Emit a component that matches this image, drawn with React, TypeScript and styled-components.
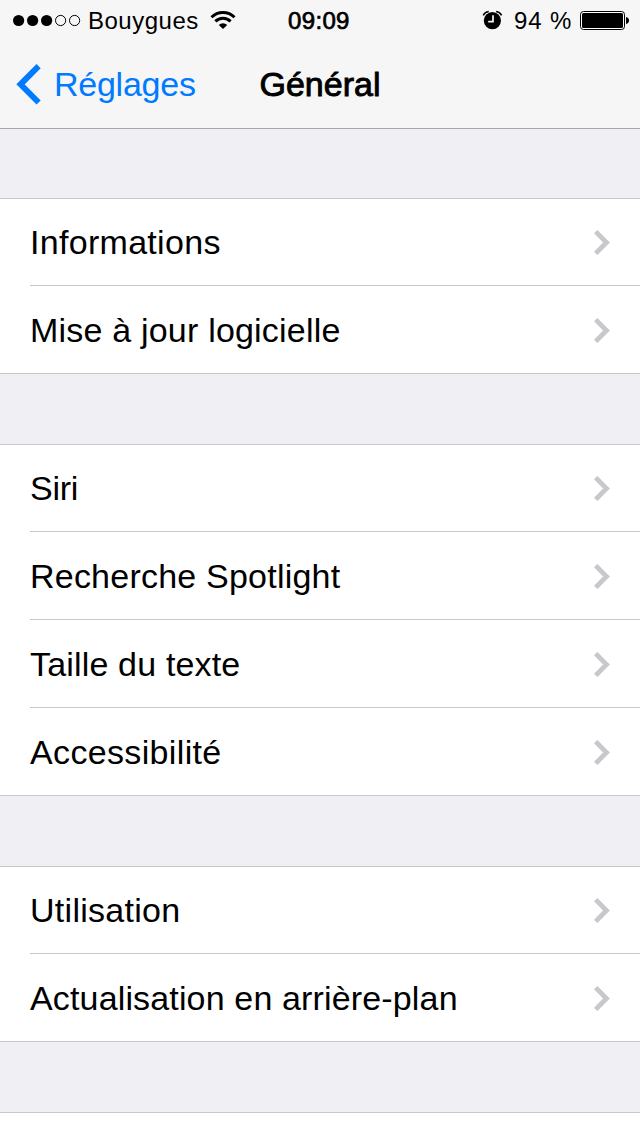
import React from 'react';
import styled, { createGlobalStyle } from 'styled-components';

const GlobalStyle = createGlobalStyle`
  * { box-sizing: border-box; }
  html, body { margin: 0; padding: 0; background: #efeff4; }
  body { overflow: hidden; }
`;

const Screen = styled.div`
  display: flex;
  flex-direction: column;
  width: 640px;
  height: 1136px;
  overflow: hidden;
  background: #efeff4;
  color: #000;
  font-family: 'Liberation Sans', Arial, Helvetica, sans-serif;
`;

const Header = styled.header`
  flex: none;
  height: 129px;
  background: #f6f6f6;
  border-bottom: 1px solid #a7a7aa;
`;

const StatusBar = styled.div`
  display: grid;
  grid-template-columns: 288px 1fr 158px;
  height: 40px;
  font-size: 24px;
  line-height: 41px;
  white-space: pre;
`;

const StatusGroup = styled.div`
  display: flex;
  align-items: flex-start;
`;

const Signal = styled.svg`
  flex: none;
  margin: 13px 6px 0 12px;
`;

const StatusText = styled.span<{ $spacing?: number }>`
  letter-spacing: ${p => p.$spacing ?? 0}px;
`;

const Wifi = styled.svg`
  flex: none;
  margin: 10px 0 0 11px;
`;

const Time = styled.span`
  letter-spacing: 0.35px;
  -webkit-text-stroke: 0.7px #000;
`;

const Alarm = styled.svg`
  flex: none;
  margin: 10px 10px 0 0;
`;

const Battery = styled.svg`
  flex: none;
  margin: 11px 0 0 8px;
`;

const NavBar = styled.nav`
  display: grid;
  grid-template-columns: 1fr 122px 1fr;
  height: 88px;
  font-size: 34px;
  line-height: 88px;
`;

const Back = styled.a`
  display: flex;
  align-items: flex-start;
  padding-left: 16px;
  color: #007aff;
  letter-spacing: -0.25px;
`;

const BackChevron = styled.svg`
  flex: none;
  margin: 24px 12px 0 0;
`;

const Title = styled.h1`
  margin: 0;
  font-size: 34px;
  font-weight: 400;
  text-align: center;
  white-space: nowrap;
  -webkit-text-stroke: 0.9px #000;
`;

const Group = styled.section<{ $first?: boolean }>`
  flex: none;
  margin-top: ${p => (p.$first ? 69 : 70)}px;
  padding-left: 30px;
  background: #fff;
  border-top: 1px solid #c8c7cc;
  border-bottom: 1px solid #c8c7cc;
`;

const Row = styled.div`
  display: flex;
  align-items: center;
  justify-content: space-between;
  padding-right: 30px;
  font-size: 34px;

  &:first-child { height: 86px; }
  & + & { height: 88px; border-top: 1px solid #c8c7cc; }
`;

const Label = styled.span<{ $spacing: number }>`
  line-height: 86px;
  white-space: nowrap;
  letter-spacing: ${p => p.$spacing}px;
`;

type Item = { label: string; spacing: number };

const groups: Item[][] = [
  [
    { label: 'Informations', spacing: 0.3 },
    { label: 'Mise à jour logicielle', spacing: 0.2 },
  ],
  [
    { label: 'Siri', spacing: -0.25 },
    { label: 'Recherche Spotlight', spacing: 0.22 },
    { label: 'Taille du texte', spacing: 0.17 },
    { label: 'Accessibilité', spacing: 0.35 },
  ],
  [
    { label: 'Utilisation', spacing: 0.28 },
    { label: 'Actualisation en arrière-plan', spacing: 0.15 },
  ],
  [{ label: '', spacing: 0 }],
];

const Disclosure = () => (
  <svg width="16" height="26" viewBox="0 0 16 26">
    <path d="M1.7 2.6 12.5 13.5 1.7 24.4" fill="none" stroke="#c7c7cc" strokeWidth="4.8" />
  </svg>
);

export default function App() {
  return (
    <Screen>
      <GlobalStyle />
      <Header>
        <StatusBar>
          <StatusGroup>
            <Signal width="70" height="15" viewBox="0 0 70 15">
              {[0, 1, 2].map(i => <circle key={i} cx={6.6 + i * 14} cy="7.5" r="5.6" />)}
              {[3, 4].map(i => (
                <circle key={i} cx={6.6 + i * 14} cy="7.5" r="5.1" fill="none" stroke="#000" strokeWidth="1" />
              ))}
            </Signal>
            <StatusText $spacing={0.5}>Bouygues</StatusText>
            <Wifi width="26" height="20" viewBox="0 0 26 20">
              <g fill="none" stroke="#000" strokeWidth="3">
                <path d="M1.5 7.2a16.3 16.3 0 0 1 23 0" />
                <path d="M5.4 11.4a10.8 10.8 0 0 1 15.2 0" />
              </g>
              <path d="M8.8 15a6 6 0 0 1 8.4 0L13 19z" />
            </Wifi>
          </StatusGroup>
          <Time>09:09</Time>
          <StatusGroup>
            <Alarm width="22" height="21" viewBox="0 0 22 21">
              <circle cx="10.4" cy="10.6" r="8.6" />
              <path d="M1.2 5.3Q3 2 6.7 1.6M14.1 1.6Q17.8 2 19.6 5.3" fill="none" stroke="#000" strokeWidth="1.5" />
              <path d="M11 5.2v6.4H6.2" fill="none" stroke="#f6f6f6" strokeWidth="1.7" />
            </Alarm>
            <StatusText $spacing={0.9}>94 %</StatusText>
            <Battery width="50" height="19" viewBox="0 0 50 19">
              <rect x="0.5" y="0.5" width="44" height="18" rx="3" fill="#fff" stroke="#000" />
              <rect x="2" y="2" width="41" height="15" rx="1.5" />
              <path d="M46 6q3 .7 3 3.5T46 13z" />
            </Battery>
          </StatusGroup>
        </StatusBar>
        <NavBar>
          <Back>
            <BackChevron width="26" height="42" viewBox="0 0 26 42">
              <path d="M22.6 2.1 4.5 20.3 22.6 38.5" fill="none" stroke="#007aff" strokeWidth="5.9" />
            </BackChevron>
            <span>Réglages</span>
          </Back>
          <Title>Général</Title>
        </NavBar>
      </Header>
      {groups.map((items, i) => (
        <Group key={i} $first={i === 0}>
          {items.map((item, j) => (
            <Row key={j}>
              <Label $spacing={item.spacing}>{item.label}</Label>
              {item.label && <Disclosure />}
            </Row>
          ))}
        </Group>
      ))}
    </Screen>
  );
}
